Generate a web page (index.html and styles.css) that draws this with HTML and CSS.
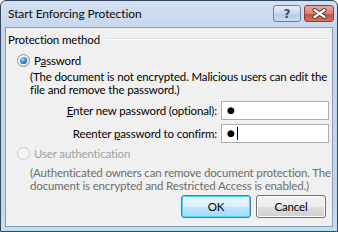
FILE: index.html
```html
<!DOCTYPE html>
<html>
<head>
<meta charset="utf-8">
<link rel="stylesheet" href="styles.css">
</head>
<body>
<div class="window">
  <div class="titlebar">
    <span class="title">Start Enforcing Protection</span>
    <div class="caption">
      <div class="cbtn help">?</div>
      <div class="cbtn close">
        <svg width="15" height="11" viewBox="0 0 15 11"><path d="M2.5 2 L12.5 9 M12.5 2 L2.5 9" stroke="#3c3c3c" stroke-width="4" stroke-linecap="round"/><path d="M2.5 2 L12.5 9 M12.5 2 L2.5 9" stroke="#ffffff" stroke-width="2.2" stroke-linecap="round"/></svg>
      </div>
    </div>
  </div>
  <div class="client">
    <div class="group-head"><span class="group-title">Protection method</span><div class="group-line"></div></div>
    <div class="radio-row"><span class="radio checked"><span class="dot"></span></span><span>P<u>a</u>ssword</span></div>
    <p class="desc">(The document is not encrypted. Malicious users can edit the<br>file and remove the password.)</p>
    <div class="field"><span class="label"><u>E</u>nter new password (optional):</span><div class="input"><span class="bullet">●</span></div></div>
    <div class="field"><span class="label">Reenter <u>p</u>assword to confirm:</span><div class="input"><span class="bullet">●</span><span class="caret"></span></div></div>
    <div class="radio-row disabled"><span class="radio"></span><span>User authentication</span></div>
    <p class="desc muted">(Authenticated owners can remove document protection. The<br>document is encrypted and Restricted Access is enabled.)</p>
    <div class="buttons"><div class="btn default">OK</div><div class="btn">Cancel</div></div>
  </div>
</div>
</body>
</html>
```
FILE: styles.css
```css
* { box-sizing: border-box; }
html, body { margin: 0; padding: 0; }
body { width: 338px; height: 232px; overflow: hidden; background: #fff; font-family: "Lato", "Liberation Sans", sans-serif; font-size: 11.5px; letter-spacing: -0.15px; color: #000; }
.window {
  width: 338px; height: 232px;
  border: 1px solid #34475f;
  border-radius: 6px 6px 0 0;
  background: linear-gradient(#d3e0f1, #c6d6ec 30px, #c4d6ec 200px, #b9e3f0);
  display: flex; flex-direction: column;
  padding: 0 4px 4px 4px;
}
.titlebar { height: 26px; display: flex; align-items: flex-start; justify-content: space-between; flex: none; }
.title { padding: 5px 0 0 3px; font-size: 12px; letter-spacing: -0.1px; color: #0c0c0c; }
.caption { display: flex; gap: 3px; padding-top: 4px; margin-right: -1px; }
.cbtn { height: 17px; border: 1px solid #6b7f9f; border-radius: 3px; display: flex; align-items: center; justify-content: center; }
.help { width: 28px; background: linear-gradient(#e7eef8, #cbd9ec 50%, #b5c9e3 51%, #c9dcf1); color: #394d6c; font-weight: bold; font-size: 12px; font-family: "DejaVu Sans", sans-serif; }
.close { width: 30px; border-color: #8d3f38; background: linear-gradient(#e9a99b, #d98070 50%, #c6513d 51%, #d6705b); }
.client {
  flex: 1; background: #f0f0f0; border: 1px solid #8a9db8;
  padding: 3px 3px 0 2px; display: flex; flex-direction: column;
}
.group-head { display: flex; align-items: center; height: 16px; }
.group-title { padding-right: 6px; }
.group-line { flex: 1; height: 2px; border-top: 1px solid #d5dfe5; border-bottom: 1px solid #fff; }
.radio-row { display: flex; align-items: center; height: 16px; margin-top: 5px; padding-left: 9px; gap: 4px; }
.radio { width: 13px; height: 13px; border-radius: 50%; border: 1px solid #8e8f8f; background: radial-gradient(circle at 40% 35%, #fff, #dcdcdc); display: flex; align-items: center; justify-content: center; }
.radio.checked .dot { width: 7px; height: 7px; border-radius: 50%; background: radial-gradient(circle at 40% 35%, #9ee0ff, #1f74c5 60%, #0b3f8f); }
.disabled { color: #a0a0a0; }
.disabled .radio { border-color: #cbcbcb; background: #f4f4f4; }
.desc { margin: 2px 0 0 22px; line-height: 13px; white-space: nowrap; }
.muted { color: #6d6d6d; margin-top: 5px; }
.field { display: flex; align-items: center; justify-content: flex-end; gap: 4px; margin-top: 4px; }
.desc + .field { margin-top: 5px; }
.label { text-align: right; }
.input { width: 108px; height: 19px; border: 1px solid #abadb3; background: #fff; display: flex; align-items: center; padding-left: 5px; }
.bullet { font-size: 9px; line-height: 1; font-family: "DejaVu Sans", sans-serif; }
.caret { width: 1px; height: 13px; background: #000; margin-left: 2px; }
.field + .radio-row { margin-top: 2px; }
.buttons { display: flex; justify-content: flex-end; gap: 5px; margin-top: 3px; padding-right: 3px; }
.btn { width: 70px; height: 23px; border: 1px solid #707070; border-radius: 3px; display: flex; align-items: center; justify-content: center; background: linear-gradient(#f2f2f2, #ebebeb 50%, #dddddd 51%, #cfcfcf); box-shadow: inset 0 0 0 1px #fcfcfc; }
.btn.default { border-color: #3c7fb1; box-shadow: inset 0 0 0 1px #48d8fb; background: linear-gradient(#eaf6fd, #d9f0fc 50%, #bee6fd 51%, #a7d9f5); }
```
